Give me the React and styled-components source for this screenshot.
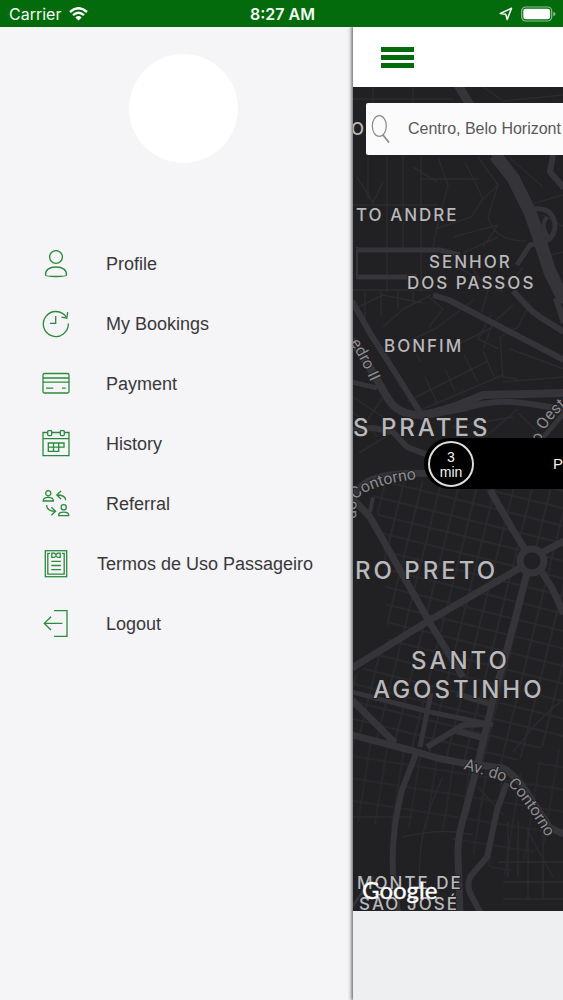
import styled, { createGlobalStyle } from "styled-components";

const GlobalStyles = createGlobalStyle`
    * {
        box-sizing: border-box;
        margin: 0;
        padding: 0;
    }

    body {
        font-family: "Liberation Sans", Arial, sans-serif;
        background-color: #f5f4f6;
    }

    button, input {
        font: inherit;
        border: none;
        background: none;
    }
`;

// styled components
const Screen = styled.div`
    min-height: 100vh;
    display: flex;
    flex-direction: column;
    overflow: hidden;
`;

const StatusBar = styled.header`
    height: 27px;
    padding: 0 7px 0 9px;
    display: grid;
    grid-template-columns: 1fr auto 1fr;
    align-items: center;
    background-color: #036b0b;
    color: #f4fbf4;
    font-family: Inter, sans-serif;
    font-size: 16px;
    line-height: 20px;
    position: relative;
    z-index: 1;
`;

const StatusGroup = styled.div`
    display: flex;
    align-items: center;
    gap: 8px;
    justify-content: ${(props) => (props.$end ? "flex-end" : "flex-start")};
`;

const Clock = styled.time`
    font-weight: 600;
`;

const Body = styled.div`
    flex: 1;
    display: flex;
`;

const Drawer = styled.aside`
    flex: 0 0 353px;
    background-color: #f5f4f6;
`;

const Avatar = styled.div`
    width: 109px;
    height: 109px;
    margin: 27px 0 0 129px;
    border-radius: 50%;
    background-color: #ffffff;
`;

const Menu = styled.ul`
    list-style: none;
    margin-top: 71px;
`;

const MenuLink = styled.a`
    height: 60px;
    padding-left: 42px;
    display: flex;
    align-items: center;
    gap: ${(props) => (props.$tight ? "27px" : "36px")};
    color: #39383b;
    font-size: 18px;
    line-height: 24px;
    text-decoration: none;
    white-space: nowrap;
`;

const LineIcon = styled.svg`
    width: 28px;
    height: 28px;
    flex: none;
    fill: none;
    stroke: #2c8a3c;
    stroke-width: 1.3;
`;

const Main = styled.main`
    flex: 1;
    min-width: 0;
    display: flex;
    flex-direction: column;
    box-shadow: 0 0 4px 1px rgba(0, 0, 0, 0.7);
    background-color: #edeff1;
`;

const TopBar = styled.div`
    height: 60px;
    padding-left: 28px;
    display: flex;
    align-items: center;
    background-color: #ffffff;
`;

const MenuButton = styled.button`
    display: grid;
    gap: 3px;
    width: 33px;

    span {
        height: 5px;
        background-color: #036b0b;
    }
`;

const MapArea = styled.section`
    position: relative;
    flex: 1;
    min-height: 560px;
    padding: 16px 0 0 13px;
    overflow: hidden;
    background-color: #212023;
`;

const MapCanvas = styled.svg`
    position: absolute;
    inset: 0;
    width: 100%;
    height: 100%;
    font-family: Inter, sans-serif;
`;

const SearchBox = styled.label`
    position: relative;
    height: 52px;
    padding-left: 5px;
    display: flex;
    align-items: center;
    gap: 17px;
    background-color: #fcfbfc;
    border-radius: 2px 0 0 2px;

    svg {
        flex: none;
    }

    input {
        flex: 1;
        min-width: 0;
        color: #59585b;
        font-size: 16px;
        outline: none;
    }
`;

const PickupBar = styled.button`
    position: relative;
    width: calc(100% - 58px);
    height: 51px;
    margin: 283px 0 0 58px;
    padding: 0 0 0 4px;
    display: flex;
    align-items: center;
    justify-content: space-between;
    overflow: hidden;
    border-radius: 26px 0 0 26px;
    background-color: #000000;
    color: #f2f2f2;
    font-size: 15px;
`;

const Eta = styled.span`
    width: 46px;
    height: 46px;
    padding: 2px 8px 0;
    display: flex;
    align-items: center;
    border: 2px solid #dddddd;
    border-radius: 50%;
    font-size: 14px;
    line-height: 15px;
`;

const BottomPanel = styled.footer`
    height: 89px;
    background-color: #edeff1;
`;

const menuItems = [
    {
        label: "Profile",
        icon: (
            <>
                <ellipse cx="14" cy="7" rx="6.4" ry="6.4" />
                <path d="M3.500 25C3.200 20 7.200 17 14 17s10.800 3 10.500 8c-.1 1.200-5 1.500-10.500 1.500S3.600 26.200 3.500 25Z" />
            </>
        ),
    },
    {
        label: "My Bookings",
        icon: (
            <>
                <path d="M26.300 13.500A12.500 12.500 0 1 1 24.300 7.200" />
                <path d="M25.700 2.200L24.800 8.200L19.500 7.200M13.700 6v7.400H8" />
            </>
        ),
    },
    {
        label: "Payment",
        icon: (
            <>
                <rect x="1" y="3.500" width="26" height="19.500" rx="1.500" />
                <path d="M1 8h26M1 12.200h26M4 18.200h7.300M20 18.200h3.700" />
            </>
        ),
    },
    {
        label: "History",
        icon: (
            <>
                <path d="M5.700 2.500H1v23.200h26V2.500h-4.700M9.700 2.500h8.600M1 8.700h26" />
                <rect x="5.700" y=".6" width="4" height="5" rx="1" />
                <rect x="18.300" y=".6" width="4" height="5" rx="1" />
                <path d="M6.300 13H22v4.200H6.300ZM6.300 17.200v4.200h10.400V13M11.500 13v8.400" />
            </>
        ),
    },
    {
        label: "Referral",
        icon: (
            <>
                <circle cx="6.300" cy="3.200" r="2.600" />
                <path d="M1.200 11C1 8.300 3 7.400 6.300 7.400s5.300.9 5.100 3.600Z" />
                <circle cx="21.700" cy="17.300" r="2.600" />
                <path d="M16.600 25.700c-.2-2.700 1.800-3.600 5.100-3.600s5.300.9 5.100 3.600Z" />
                <path d="M23.700 10.200C23.600 6.700 20.500 5 15 5M19 1l-4.200 4L19 9" />
                <path d="M4.700 15c0 4 3 6.300 8.800 6.300M9.300 17.300l4.300 4-4.300 4" />
            </>
        ),
    },
    {
        label: "Termos de Uso Passageiro",
        tight: true,
        icon: (
            <>
                <rect x="3.300" y=".7" width="21.400" height="26" />
                <path d="M8 3.400H5.800v20.700h16.400V3.400H20" />
                <path d="M9.800 3.200h2.700l1.500 1.600 1.500-1.600h2.700v4.200h-2.400L14 6l-1.800 1.400H9.800Z" />
                <path d="M9.300 11.300h9.600M9.300 15.500h9.600M9.300 19.700h9.600" />
            </>
        ),
    },
    {
        label: "Logout",
        icon: (
            <>
                <path d="M12 .7h13v25.600H12" />
                <path d="M20.300 13.400H2.300M9 6.700l-6.700 6.700L9 20" />
            </>
        ),
    },
];

// main avenues: path + thickness
const avenues = [
    ["M105-2L114 13L144 70", 9],
    ["M142 68L160 91L177 125L185 148L197 185L212 215", 13],
    ["M200 68L197 85L211 101", 6],
    ["M180 122Q200 120 202 138Q202 152 188 156L177 158L164 178", 5],
    ["M194 130Q186 140 197 152", 4],
    ["M4 163H87L107 168", 5],
    ["M4 190H64", 5],
    ["M4 160V192", 2],
    ["M80 208L96 213L211 273", 6],
    ["M160 204L180 225L190 232L211 245", 6],
    ["M203 211L211 236", 6],
    ["M-1 214L17 246L67 325", 6],
    ["M-1 253L20 286L34 310Q44 328 67 328Q88 326 130 308L211 306", 8],
    ["M67 330L114 321Q140 312 170 316L211 322", 6],
    ["M-1 295L24 301", 5],
    ["M-1 343L20 341L40 345L54 360L80 370", 6],
    ["M-3 413Q8 396 20 392Q46 383 100 388", 7],
    ["M137 403L160 443L172 462", 7],
    ["M211 326L194 346L180 360", 5],
    ["M188 466L211 454", 7],
    ["M189 485L200 503L211 527", 7],
    ["M174 486L160 540L140 613L124 680L112 726Q104 750 105 770L107 825", 7],
    ["M167 481L77 533L-1 581", 7],
    ["M-1 411L17 430L77 536L110 590", 7],
    ["M20 410L17 425", 4],
    ["M-1 605L77 625L140 638", 5],
    ["M104 607L140 618", 6],
    ["M-1 613L42 656", 7],
    ["M78 606L67 660", 5],
    ["M-1 648L57 663L84 671L110 676L150 681Q166 690 180 715L197 741L211 747", 7],
    ["M64 664L49 703Q38 745 40 786L45 825", 6],
    ["M74 660L110 638L137 637", 6],
    ["M100 643L130 651", 6],
    ["M154 696L144 723L134 770L117 790Q113 800 119 810L127 825", 6],
    ["M-1 820L20 790", 3],
];

const streets =
    "M0 12H100M20 0V30M60 0V18M130 0L150 14L210 8M15 70V112M4 90L20 116L30 95M34 70V205M50 68V160M68 70V205M0 118H85" +
    "M85 70L95 98L84 140L80 160M68 92H125M60 80L84 95M112 75L130 112L118 130L82 142M130 112L145 98L125 70M100 150L145 138L130 160" +
    "M110 166L145 150M145 98L135 130Q142 154 172 154M158 72L190 100M210 108L176 118M211 140L190 128M210 165L190 170" +
    "M0 203H78M5 220L30 208L70 216M12 205V232M28 203V228M45 203V222M60 203V214M120 182L135 204L128 226M95 175L150 205" +
    "M170 180L155 200L140 193M30 240L50 222L78 208M38 262L82 242L122 212M68 275L56 254M76 240L90 222L76 210" +
    "M160 218L140 236L130 262M175 220L165 240L147 250L150 290L165 292M146 262L125 252L138 228M157 262L211 282" +
    "M55 314L135 274M63 325L150 288M72 290L84 316M92 282L102 304M111 268L125 296M130 264L142 292M96 262L140 240" +
    "M0 310L30 330M10 340L30 310M0 325L25 350M6 366L40 345M130 352L165 322M100 340L160 330M165 326L190 350" +
    "M150 295L210 290M0 730H60M50 750Q90 740 120 748M72 830Q55 760 90 690M125 700L150 728M145 775H211M150 795H211M150 812H211" +
    "M155 735V790M165 735V790M175 740V812M190 745V812M175 745L200 790M160 665L180 640Q200 620 211 612";

const districts = [
    { name: "O", x: -2, y: 48 },
    { name: "TO ANDRE", x: 3, y: 134 },
    { name: "SENHOR", x: 76, y: 181 },
    { name: "DOS PASSOS", x: 54, y: 202 },
    { name: "BONFIM", x: 31, y: 265 },
    { name: "S PRATES", x: 0, y: 349, large: true },
    { name: "RO PRETO", x: 2, y: 492, large: true },
    { name: "SANTO", x: 58, y: 582, large: true },
    { name: "AGOSTINHO", x: 20, y: 611, large: true },
    { name: "MONTE DE", x: 4, y: 802 },
    { name: "SÃO JOSÉ", x: 6, y: 823 },
];

const roadNames = [
    { id: "pedro", name: "edro II", d: "M-3 256Q6 268 22 304" },
    { id: "contornoWest", name: "Contorno", d: "M2 413Q22 394 80 391" },
    { id: "doWest", name: "do", d: "M3 432L4 408" },
    { id: "oeste", name: "o Oeste", d: "M188 356Q191 332 226 310" },
    { id: "contornoEast", name: "Av. do Contorno", d: "M110 682Q138 690 149 694Q166 702 200 762" },
];

function CityMap() {
    return (
        <MapCanvas viewBox="0 0 210 824" preserveAspectRatio="xMinYMin slice" role="img" aria-label="Map of Belo Horizonte">
            <defs>
                <pattern id="blocks" width="18" height="17" patternUnits="userSpaceOnUse" patternTransform="rotate(14)">
                    <path d="M0 1H18M1 0V17" stroke="#2b2a2e" strokeWidth="1.5" />
                </pattern>
                <pattern id="blocksSouth" width="17" height="22" patternUnits="userSpaceOnUse" patternTransform="rotate(9)">
                    <path d="M0 1H17M1 0V22" stroke="#29282c" strokeWidth="1.5" />
                </pattern>
                {roadNames.map((road) => (
                    <path key={road.id} id={road.id} d={road.d} />
                ))}
            </defs>

            <path d="M18 400L60 394H210V650L150 680L84 670L0 645V590L35 560L30 450Z" fill="url(#blocks)" />
            <path d="M0 650L110 676L160 690L211 660V740L150 790L90 745L0 735Z" fill="url(#blocksSouth)" />

            <g fill="none" strokeLinejoin="round">
                <path d={streets} stroke="#2b2a2e" strokeWidth="1.5" />
                <g stroke="#353438">
                    {avenues.map(([d, width]) => (
                        <path key={d} d={d} strokeWidth={width} />
                    ))}
                </g>
                <circle cx="179" cy="474" r="12" fill="#212023" stroke="#353438" strokeWidth="7" />
            </g>

            <g stroke="#212023" strokeWidth="2" paintOrder="stroke">
                {roadNames.map((road) => (
                    <text key={road.id} fontFamily="Roboto, sans-serif" fontSize="16" fill="#8d8c90">
                        <textPath href={`#${road.id}`}>{road.name}</textPath>
                    </text>
                ))}
                {districts.map((place) => (
                    <text
                        key={place.name}
                        x={place.x}
                        y={place.y}
                        fontSize={place.large ? 24 : 17}
                        fontWeight="500"
                        letterSpacing={place.large ? 3 : 2}
                        fill="#b9b8bb"
                    >
                        {place.name}
                    </text>
                ))}
            </g>

            <text x="9" y="812" fontFamily="Lato, sans-serif" fontSize="24" fill="#ffffff" stroke="#ffffff" strokeWidth=".4">
                Google
            </text>
        </MapCanvas>
    );
}

function App() {
    return (
        <Screen>
            <GlobalStyles />

            <StatusBar>
                <StatusGroup>
                    <span>Carrier</span>
                    <svg width="19" height="14" viewBox="0 0 19 14" fill="none" stroke="#fff" strokeWidth="2.400">
                        <path d="M1 5Q9.500-2.600 18 5M4 8.200Q9.500 3.200 15 8.200" />
                        <path d="M6.300 10.400Q9.500 7.600 12.700 10.400L9.500 13.600Z" fill="#fff" stroke="none" />
                    </svg>
                </StatusGroup>
                <Clock>8:27 AM</Clock>
                <StatusGroup $end>
                    <svg width="14" height="14" viewBox="0 0 14 14" fill="none" stroke="#fff" strokeWidth="1.500" strokeLinejoin="round">
                        <path d="M12.500 1.300L1.300 6.500L6.700 7.200L8.200 12.500Z" />
                    </svg>
                    <svg width="35" height="16" viewBox="0 0 35 16">
                        <rect x=".7" y="1" width="30" height="14" rx="4" fill="none" stroke="#8fbf92" strokeWidth="1.200" />
                        <rect x="2.300" y="2.700" width="26.800" height="10.600" rx="2.400" fill="#fff" />
                        <path d="M32.300 5.800Q34.600 6.600 34.600 8T32.300 10.200Z" fill="#8fbf92" />
                    </svg>
                </StatusGroup>
            </StatusBar>

            <Body>
                <Drawer>
                    <Avatar />
                    <nav>
                        <Menu>
                            {menuItems.map((item) => (
                                <li key={item.label}>
                                    <MenuLink href="#" $tight={item.tight}>
                                        <LineIcon viewBox="0 0 28 28">{item.icon}</LineIcon>
                                        {item.label}
                                    </MenuLink>
                                </li>
                            ))}
                        </Menu>
                    </nav>
                </Drawer>

                <Main>
                    <TopBar>
                        <MenuButton type="button" aria-label="Menu">
                            <span />
                            <span />
                            <span />
                        </MenuButton>
                    </TopBar>

                    <MapArea>
                        <CityMap />
                        <SearchBox>
                            <svg width="20" height="30" viewBox="0 0 20 30" fill="none" stroke="#8b8a8d" strokeWidth="1.200">
                                <ellipse cx="8.300" cy="12" rx="7" ry="10.400" />
                                <path d="M12 21L18 28.500" strokeWidth="1.800" />
                            </svg>
                            <input type="text" aria-label="Pickup address" defaultValue="Centro, Belo Horizont" />
                        </SearchBox>
                        <PickupBar type="button">
                            <Eta>3 min</Eta>
                            <span>P</span>
                        </PickupBar>
                    </MapArea>

                    <BottomPanel />
                </Main>
            </Body>
        </Screen>
    );
}

export default App;
